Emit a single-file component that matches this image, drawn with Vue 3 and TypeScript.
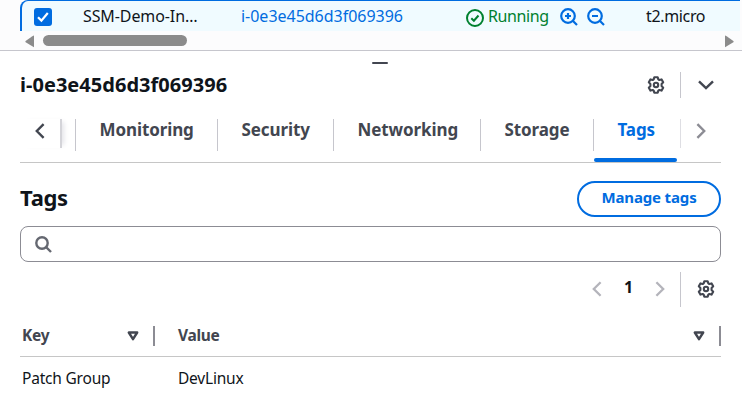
<script setup lang="ts">
interface Tab { label: string; cls: string; active?: boolean }
const tabs: Tab[] = [
  { label: 'Monitoring', cls: 'w-monitoring' },
  { label: 'Security', cls: 'w-security' },
  { label: 'Networking', cls: 'w-networking' },
  { label: 'Storage', cls: 'w-storage' },
  { label: 'Tags', cls: 'w-tags', active: true },
]
const instanceId = 'i-0e3e45d6d3f069396'
const gear = 'M7.3 1.2h3.4l.6 2.2 1 .6 2.2-.6 1.7 2.9-1.6 1.6v2.2l1.6 1.6-1.7 2.9-2.2-.6-1 .6-.6 2.2H7.3l-.6-2.2-1-.6-2.2.6-1.7-2.9 1.6-1.6V7.9L1.8 6.3l1.7-2.9 2.2.6 1-.6z'
</script>

<template>
  <div class="page">
    <div class="list">
      <div class="row">
        <span class="check">
          <svg width="18" height="18" viewBox="0 0 18 18"><path d="M4 9.2l3.4 3.4L13.8 5" fill="none" stroke="#fff" stroke-width="2.2" /></svg>
        </span>
        <span class="name">SSM-Demo-In…</span>
        <a class="link">{{ instanceId }}</a>
        <span class="state">
          <svg width="18" height="18" viewBox="0 0 18 18" fill="none" stroke="#00802f" stroke-width="2"><circle cx="9" cy="9" r="8" /><path d="M5.3 9.2l2.6 2.5 4.6-5.2" /></svg>
          <span class="running">Running</span>
        </span>
        <svg class="mag" width="18" height="18" viewBox="0 0 18 18" fill="none" stroke="#006ce0" stroke-width="2.2"><circle cx="8" cy="8" r="6.8" /><path d="M13 13l4 4M8 5v6M5 8h6" /></svg>
        <svg class="mag second" width="18" height="18" viewBox="0 0 18 18" fill="none" stroke="#006ce0" stroke-width="2.2"><circle cx="8" cy="8" r="6.8" /><path d="M13 13l4 4M5 8h6" /></svg>
        <span class="type">t2.micro</span>
      </div>
      <div class="scroll">
        <svg width="10" height="13" viewBox="0 0 10 13"><path d="M9 .8v11.4L.6 7.2q-.6-.6 0-1.2L7.4 1.2Q9 .2 9 .8z" fill="#8b8b8b" /></svg>
        <span class="thumb"></span>
        <svg class="right" width="10" height="13" viewBox="0 0 10 13"><path d="M1 .8v11.4l8.4-5q.6-.6 0-1.2L2.6 1.2Q1 .2 1 .8z" fill="#8b8b8b" /></svg>
      </div>
    </div>

    <div class="panel">
      <div class="grip"></div>
      <header class="head">
        <h2 class="title">{{ instanceId }}</h2>
        <svg class="gear" width="18" height="18" viewBox="0 0 18 18" fill="none" stroke="#424650" stroke-width="2.1" stroke-linejoin="round"><path :d="gear" /><circle cx="9" cy="9" r="2.2" /></svg>
        <span class="vline"></span>
        <svg class="down" width="16" height="10" viewBox="0 0 16 10" fill="none" stroke="#424650" stroke-width="2.4"><path d="M1 1.3l7 6.8 7-6.8" /></svg>
      </header>

      <nav class="tabs">
        <div class="prev"><svg width="10" height="16" viewBox="0 0 10 16" fill="none" stroke="#424650" stroke-width="2.4"><path d="M8.6 1.2L1.8 8l6.8 6.8" /></svg></div>
        <div v-for="t in tabs" :key="t.label" class="tab" :class="[t.cls, { active: t.active }]"><span>{{ t.label }}</span></div>
        <div class="next"><svg width="10" height="16" viewBox="0 0 10 16" fill="none" stroke="#8c8c94" stroke-width="2.4"><path d="M1.4 1.2L8.2 8l-6.8 6.8" /></svg></div>
      </nav>

      <div class="section">
        <h3 class="heading">Tags</h3>
        <button class="manage">Manage tags</button>
      </div>

      <div class="search">
        <svg width="18" height="18" viewBox="0 0 18 18" fill="none" stroke="#656871" stroke-width="2.4"><circle cx="7" cy="7" r="5.7" /><path d="M11 11l5 5" /></svg>
      </div>

      <div class="pager">
        <svg width="10" height="16" viewBox="0 0 10 16" fill="none" stroke="#b4b4bb" stroke-width="2.3"><path d="M8.6 1.2L1.8 8l6.8 6.8" /></svg>
        <span class="num">1</span>
        <svg width="10" height="16" viewBox="0 0 10 16" fill="none" stroke="#b4b4bb" stroke-width="2.3"><path d="M1.4 1.2L8.2 8l-6.8 6.8" /></svg>
        <span class="vline tall"></span>
        <svg class="gear2" width="18" height="18" viewBox="0 0 18 18" fill="none" stroke="#424650" stroke-width="2.1" stroke-linejoin="round"><path :d="gear" /><circle cx="9" cy="9" r="2.2" /></svg>
      </div>

      <div class="grid header">
        <div class="cell"><span>Key</span><svg width="12" height="10" viewBox="0 0 12 10"><path d="M1.8 1.5h8.4L6 8.2z" fill="none" stroke="#424650" stroke-width="2.4" stroke-linejoin="round" /></svg></div>
        <div class="cell value"><span>Value</span><svg width="12" height="10" viewBox="0 0 12 10"><path d="M1.8 1.5h8.4L6 8.2z" fill="none" stroke="#424650" stroke-width="2.4" stroke-linejoin="round" /></svg></div>
      </div>
      <div class="grid body">
        <div>Patch Group</div>
        <div class="value">DevLinux</div>
      </div>
    </div>
  </div>
</template>

<style>
body { background: #fff; overflow: hidden; }
</style>
<style scoped>
.page { width: 742px; height: 410px; box-sizing: border-box; font-family: "Noto Sans", sans-serif; font-size: 16px; color: #0f141a; background: #fff; overflow: hidden; }
.page * { box-sizing: border-box; }
svg { display: block; flex: none; }
.list { height: 51px; background: #fcfcfd; border-bottom: 1px solid #c6c6cd; }
.row { display: flex; align-items: center; height: 31px; margin-left: 20px; width: 720px; background: #f0fbff; border-top: 1px solid #006ce0; border-left: 2px solid #006ce0; border-top-left-radius: 8px; white-space: nowrap; line-height: 30px; }
.check { width: 18px; height: 18px; margin-left: 12px; background: #006ce0; border-radius: 3px; margin-top: 2px; }
.name { width: 158px; margin-left: 31px; letter-spacing: -0.1px; }
.link { width: 225px; color: #006ce0; letter-spacing: -0.02px; }
.state { display: flex; align-items: center; width: 94px; color: #00802f; }
.running { margin-left: 4px; letter-spacing: -0.4px; }
.state svg { margin-top: 4px; }
.mag { margin-top: 2px; }
.second { margin-left: 9px; }
.type { margin-left: 41px; letter-spacing: -0.35px; }
.scroll { display: flex; align-items: center; height: 19px; padding: 1px 8px 0 25px; }
.thumb { width: 144px; height: 11px; margin-left: 8px; border-radius: 6px; background: #8b8b8b; margin-top: -1px; }
.right { margin-left: auto; }
.panel { padding: 0 21px 0 20px; }
.grip { width: 16px; height: 2px; margin: 11px 0 0 352px; background: #424650; border-radius: 1px; }
.head { display: flex; align-items: center; height: 42px; }
.title { margin: -2px 0 0; font-size: 20px; font-weight: 700; flex: 1; letter-spacing: 0.03px; }
.vline { width: 1px; height: 26px; background: #c6c6cd; }
.gear { margin-right: 15px; }
.down { margin: 0 7px 0 17px; }
.tabs { display: flex; align-items: flex-start; height: 57px; padding-top: 13px; border-bottom: 1px solid #c6c6c6; font-size: 17px; font-weight: 700; color: #424650; letter-spacing: -0.1px; }
.prev { width: 42px; height: 29px; padding: 4px 0 0 15px; border-right: 2px solid #d4d4d9; box-shadow: 5px 0 5px -3px #e3e3e8; margin-right: 13px; }
.tab { display: flex; height: 32px; padding-left: 23.5px; border-left: 1px solid #c6c6cd; line-height: 22px; white-space: nowrap; }
.w-monitoring { width: 142px; }
.w-security { width: 116px; }
.w-networking { width: 147px; }
.w-storage { width: 113px; }
.w-tags { width: 87px; position: relative; }
.tab.active { color: #006ce0; }
.tab.active::after { content: ""; position: absolute; left: 0; top: 39px; width: 83px; height: 4px; background: #006ce0; border-radius: 2px; }
.next { height: 29px; padding: 4px 0 0 15px; border-left: 1px solid #dedee3; }
.section { display: flex; align-items: center; justify-content: space-between; height: 63px; padding-top: 9px; }
.heading { margin: -4px 0 0; font-size: 22px; line-height: 30px; letter-spacing: -0.3px; }
.manage { width: 144px; height: 36px; margin-top: 0; border: 2px solid #006ce0; border-radius: 18px; background: #fff; color: #006ce0; font: 700 15px/29px "Noto Sans", sans-serif; letter-spacing: -0.15px; padding: 0 0 3px; white-space: nowrap; }
.search { height: 36px; border: 1px solid #8c8c94; border-radius: 8px; padding: 9px 14px; }
.pager { display: flex; align-items: center; justify-content: flex-end; height: 54px; }
.num { width: 53px; text-align: center; font-size: 16px; font-weight: 700; margin-top: -4px; }
.tall { height: 35px; margin-left: 15px; }
.gear2 { margin: 0 6px 0 16px; }
.grid { display: grid; grid-template-columns: 135px 566px; }
.header { height: 41px; padding-top: 10px; border-bottom: 1px solid #c6c6c6; color: #424650; font-size: 15.5px; font-weight: 700; }
.cell { display: flex; align-items: center; justify-content: space-between; height: 20px; padding: 0 14px 0 2px; border-right: 2px solid #8c8c94; letter-spacing: -0.3px; }
.cell span { margin-top: -2px; }
.cell.value { padding-left: 23px; }
.value { padding-left: 23px; }
.body { height: 43px; line-height: 43px; padding-left: 2px; grid-template-columns: 133px 566px; letter-spacing: -0.2px; font-size: 15.5px; }
</style>
